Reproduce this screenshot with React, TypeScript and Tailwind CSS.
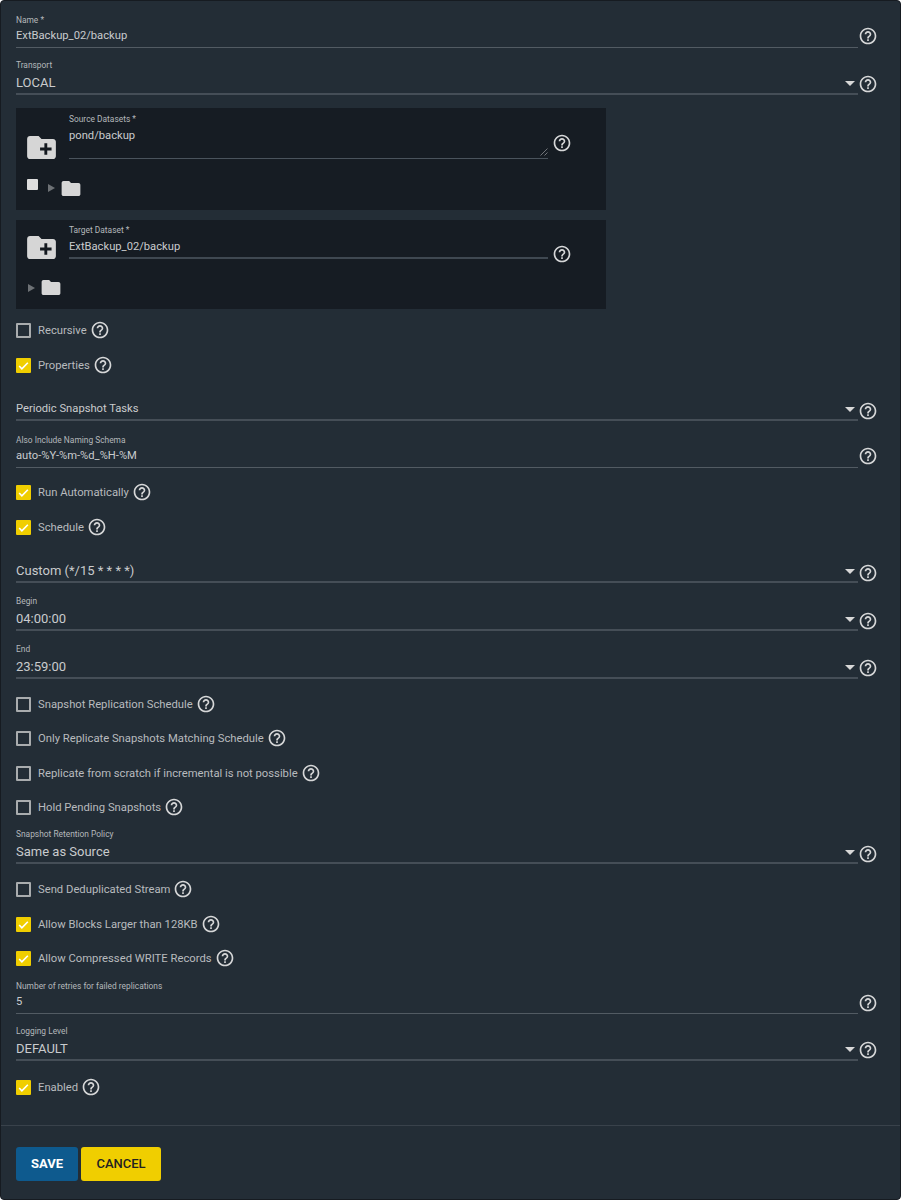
import type { ReactNode } from 'react'

function HelpIcon({ className = '' }: { className?: string }) {
  return (
    <svg viewBox="0 0 24 24" className={`w-5 h-5 shrink-0 text-[#d6d7d8] ${className}`} fill="currentColor">
      <path d="M11 18h2v-2h-2v2zm1-16C6.48 2 2 6.48 2 12s4.48 10 10 10 10-4.48 10-10S17.52 2 12 2zm0 18c-4.41 0-8-3.59-8-8s3.59-8 8-8 8 3.59 8 8-3.59 8-8 8zm0-14c-2.21 0-4 1.79-4 4h2c0-1.1.9-2 2-2s2 .9 2 2c0 2-3 1.75-3 5h2c0-2.25 3-2.5 3-5 0-2.21-1.79-4-4-4z" />
    </svg>
  )
}

function FolderPlus() {
  return (
    <svg viewBox="2 4 20 16" className="w-[29px] h-[23px] text-[#d6d6d6]" fill="currentColor">
      <path d="M20 6h-8l-2-2H4c-1.11 0-2 .89-2 2v12c0 1.11.89 2 2 2h16c1.11 0 2-.89 2-2V8c0-1.11-.89-2-2-2z" />
      <path d="M18 14h-3v3h-2v-3h-3v-2h3V9h2v3h3v2z" fill="#14191f" transform="translate(1 0)" />
    </svg>
  )
}

function Folder() {
  return (
    <svg viewBox="2 4 20 16" className="w-5 h-[15px] text-[#d6d6d6]" fill="currentColor">
      <path d="M10 4H4c-1.1 0-2 .9-2 2v12c0 1.1.9 2 2 2h16c1.1 0 2-.9 2-2V8c0-1.1-.9-2-2-2h-8l-2-2z" />
    </svg>
  )
}

function Field({
  label,
  value,
  select,
  small,
  className = '',
  helpClass = '',
}: {
  label?: string
  value: string
  select?: boolean
  small?: boolean
  className?: string
  helpClass?: string
}) {
  return (
    <div className={`flex items-end ${className}`}>
      <div className="flex-1 min-w-0">
        {label && <div className="text-[8.4px] leading-[10px] text-[#b4b8bb]">{label}</div>}
        <div
          className={`flex items-center justify-between text-[#c9cbcd] ${small ? 'text-[11.2px]' : 'text-[13px]'} ${
            select ? 'h-[25px] pt-[3px] border-b-2 border-[#454e57]' : 'h-[23px] pt-[1px] border-b border-[#525b63]'
          }`}
        >
          <span>{value}</span>
          {select && <span className="mr-[3px] border-x-[5px] border-x-transparent border-t-[5px] border-t-[#d8d8d8]" />}
        </div>
      </div>
      <HelpIcon className={helpClass || (select ? '' : 'mb-[2px]')} />
    </div>
  )
}

function Check({ label, checked, className = '' }: { label: string; checked?: boolean; className?: string }) {
  return (
    <div className={`flex items-center h-5 ${className}`}>
      {checked ? (
        <span className="w-[15px] h-[15px] rounded-[1px] bg-[#f0ce00] flex items-center justify-center">
          <svg viewBox="0 0 24 24" className="w-[13px] h-[13px]" fill="none" stroke="#fff" strokeWidth="3">
            <path d="M4 13l5 5L20 7" />
          </svg>
        </span>
      ) : (
        <span className="w-[15px] h-[15px] rounded-[1px] border-2 border-[#a9acae]" />
      )}
      <span className="ml-[7px] mt-[2px] text-[11.25px] text-[#b8bbbe]">{label}</span>
      <HelpIcon className="ml-[3px]" />
    </div>
  )
}

function DatasetBox({ className = '', children }: { className?: string; children: ReactNode }) {
  return <div className={`w-[590px] bg-[#161c23] ${className}`}>{children}</div>
}

export default function App() {
  return (
    <div
      className="w-[901px] h-[1200px] bg-[#232d36] border border-[#161b21] rounded-[4px] overflow-hidden"
      style={{ fontFamily: 'Roboto, sans-serif' }}
    >
      <div className="pl-[15px] pr-[22px] pt-[14px]">
        <Field label="Name *" value="ExtBackup_02/backup" small />
        <Field label="Transport" value="LOCAL" select className="mt-3" helpClass="mb-[1px]" />

        <DatasetBox className="mt-[13px] h-[102px]">
          <div className="flex">
            <div className="pl-[11px] pt-7">
              <FolderPlus />
            </div>
            <div className="ml-[13px] mt-[6px] w-[479px]">
              <div className="text-[8.4px] leading-[10px] text-[#b4b8bb]">Source Datasets *</div>
              <div className="relative h-[35px] pt-[1px] text-[11.2px] leading-[22px] text-[#c9cbcd] border-b border-[#4a535c]">
                pond/backup
                <svg viewBox="0 0 8 8" className="absolute right-0 bottom-[2px] w-2 h-2" stroke="#8a8d90" strokeWidth="0.8">
                  <path d="M0.5 7.5L7.5 0.5M4.5 7.5L7.5 4.5" />
                </svg>
              </div>
            </div>
            <HelpIcon className="ml-1 mt-[25px]" />
          </div>
          <div className="flex items-start pl-[11px] mt-5">
            <span className="w-[11px] h-[11px] bg-[#dedede] rounded-[1px]" />
            <span className="ml-[10px] mt-[5px] border-y-[4px] border-y-transparent border-l-[7px] border-l-[#6d7175]" />
            <span className="ml-[6px] mt-[2px] flex">
              <Folder />
            </span>
          </div>
        </DatasetBox>

        <DatasetBox className="mt-[10px] h-[89px]">
          <div className="flex">
            <div className="pl-[11px] pt-4">
              <FolderPlus />
            </div>
            <div className="ml-[13px] mt-[5px] w-[479px]">
              <div className="text-[8.4px] leading-[10px] text-[#b4b8bb]">Target Dataset *</div>
              <div className="h-6 pt-[1px] text-[11.2px] leading-[22px] text-[#c9cbcd] border-b-2 border-[#3f4851]">
                ExtBackup_02/backup
              </div>
            </div>
            <HelpIcon className="ml-1 mt-6" />
          </div>
          <div className="flex items-center pl-3 mt-4">
            <span className="border-y-[4px] border-y-transparent border-l-[7px] border-l-[#6d7175]" />
            <span className="ml-[6px] flex">
              <Folder />
            </span>
          </div>
        </DatasetBox>

        <Check label="Recursive" className="mt-[11px]" />
        <Check label="Properties" checked className="mt-[15px]" />

        <Field value="Periodic Snapshot Tasks" select small className="mt-[21px]" />
        <Field label="Also Include Naming Schema" value="auto-%Y-%m-%d_%H-%M" small className="mt-[14px]" />

        <Check label="Run Automatically" checked className="mt-[14px]" />
        <Check label="Schedule" checked className="mt-[15px]" />

        <Field value="Custom (*/15 * * * *)" select className="mt-[21px]" />
        <Field label="Begin" value="04:00:00" select className="mt-[13px]" />
        <Field label="End" value="23:59:00" select className="mt-[13px]" helpClass="mb-[1px]" />

        <Check label="Snapshot Replication Schedule" className="mt-[15px]" />
        <Check label="Only Replicate Snapshots Matching Schedule" className="mt-[14px]" />
        <Check label="Replicate from scratch if incremental is not possible" className="mt-[15px]" />
        <Check label="Hold Pending Snapshots" className="mt-[14px]" />

        <Field label="Snapshot Retention Policy" value="Same as Source" select className="mt-3" />

        <Check label="Send Deduplicated Stream" className="mt-[15px]" />
        <Check label="Allow Blocks Larger than 128KB" checked className="mt-[15px]" />
        <Check label="Allow Compressed WRITE Records" checked className="mt-[14px]" />

        <Field label="Number of retries for failed replications" value="5" small className="mt-[13px]" helpClass="mb-[1px]" />
        <Field label="Logging Level" value="DEFAULT" select className="mt-3" helpClass="mb-[1px]" />

        <Check label="Enabled" checked className="mt-4" />
      </div>

      <div className="mt-7 border-t border-[#39424b] pl-[15px] pt-[21px] flex gap-[3px]">
        <button className="w-[62px] h-[34px] rounded-[3px] bg-[#0e5a8e] text-white text-[13px] font-bold">SAVE</button>
        <button className="w-20 h-[34px] rounded-[3px] bg-[#f0ce00] text-[#222] text-[13px] font-medium">CANCEL</button>
      </div>
    </div>
  )
}
